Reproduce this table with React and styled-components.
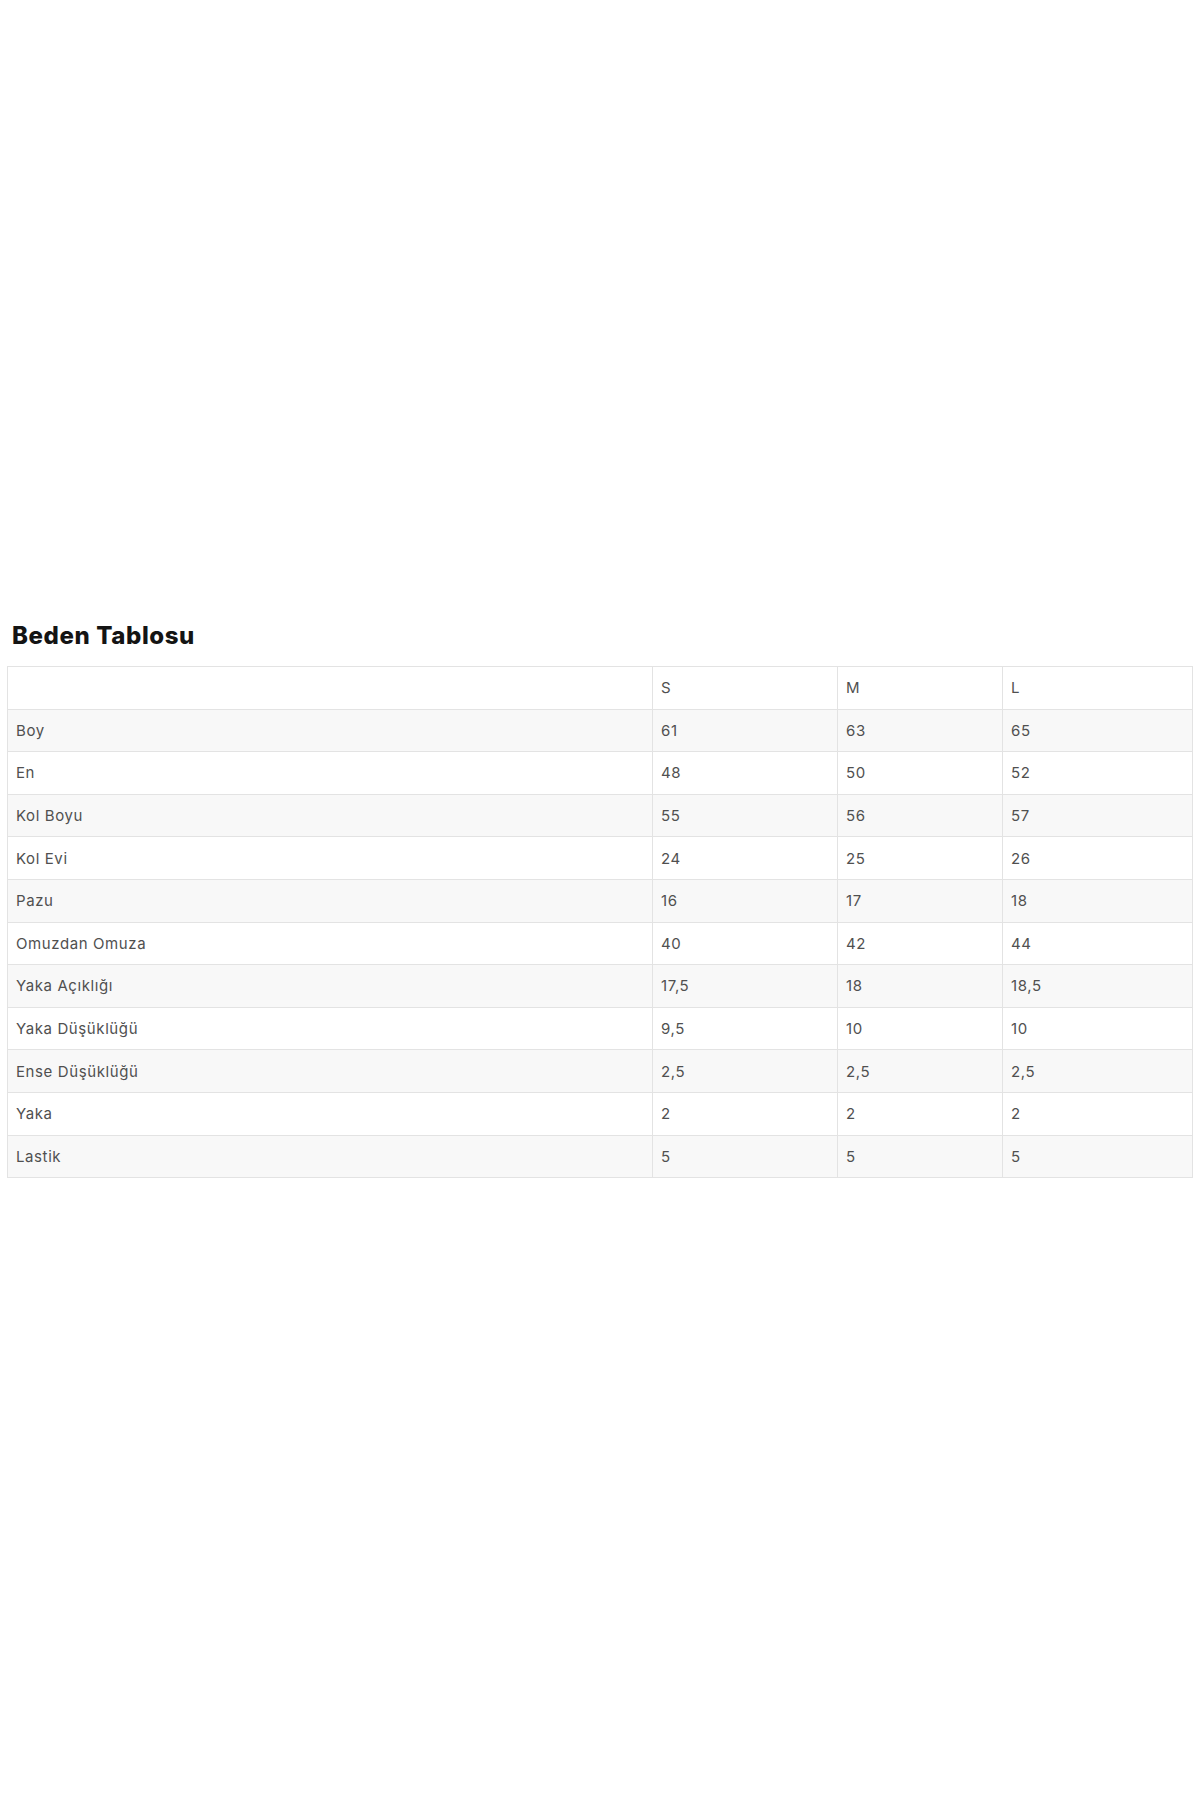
import React from "react";
import styled, { createGlobalStyle } from "styled-components";

const Global = createGlobalStyle`
  html, body { margin: 0; padding: 0; background: #fff; }
  body { font-family: "Inter", "Open Sans", sans-serif; }
`;

const Page = styled.div`
  width: 1200px;
  min-height: 1800px;
  box-sizing: border-box;
  padding: 621px 7px 0 7px;
`;

const Title = styled.h2`
  margin: 0 0 16px 5px;
  font-size: 24px;
  line-height: 29px;
  font-weight: 800;
  color: #141414;
  letter-spacing: 0.6px;
`;

const Table = styled.table`
  width: 1185px;
  border-collapse: collapse;
  table-layout: fixed;
  border: 1px solid #e3e3e3;
`;

const Row = styled.tr`
  background: ${(p) => (p.$shaded ? "#f8f8f8" : "#ffffff")};
`;

const Cell = styled.td`
  height: 42.6px;
  padding: 0 8px;
  border: 1px solid #e3e3e3;
  font-size: 15px;
  letter-spacing: 0.6px;
  color: #505050;
  font-weight: 400;
  text-align: left;
  vertical-align: middle;
  box-sizing: border-box;
`;

const rows = [
  ["Boy", "61", "63", "65"],
  ["En", "48", "50", "52"],
  ["Kol Boyu", "55", "56", "57"],
  ["Kol Evi", "24", "25", "26"],
  ["Pazu", "16", "17", "18"],
  ["Omuzdan Omuza", "40", "42", "44"],
  ["Yaka Açıklığı", "17,5", "18", "18,5"],
  ["Yaka Düşüklüğü", "9,5", "10", "10"],
  ["Ense Düşüklüğü", "2,5", "2,5", "2,5"],
  ["Yaka", "2", "2", "2"],
  ["Lastik", "5", "5", "5"],
];

export default function App() {
  return (
    <Page>
      <Global />
      <Title>Beden Tablosu</Title>
      <Table>
        <colgroup>
          <col style={{ width: 645 }} />
          <col style={{ width: 185 }} />
          <col style={{ width: 165 }} />
          <col style={{ width: 190 }} />
        </colgroup>
        <tbody>
          <Row>
            <Cell></Cell>
            <Cell>S</Cell>
            <Cell>M</Cell>
            <Cell>L</Cell>
          </Row>
          {rows.map((r, i) => (
            <Row key={r[0]} $shaded={i % 2 === 0}>
              {r.map((c, j) => (
                <Cell key={j}>{c}</Cell>
              ))}
            </Row>
          ))}
        </tbody>
      </Table>
    </Page>
  );
}
